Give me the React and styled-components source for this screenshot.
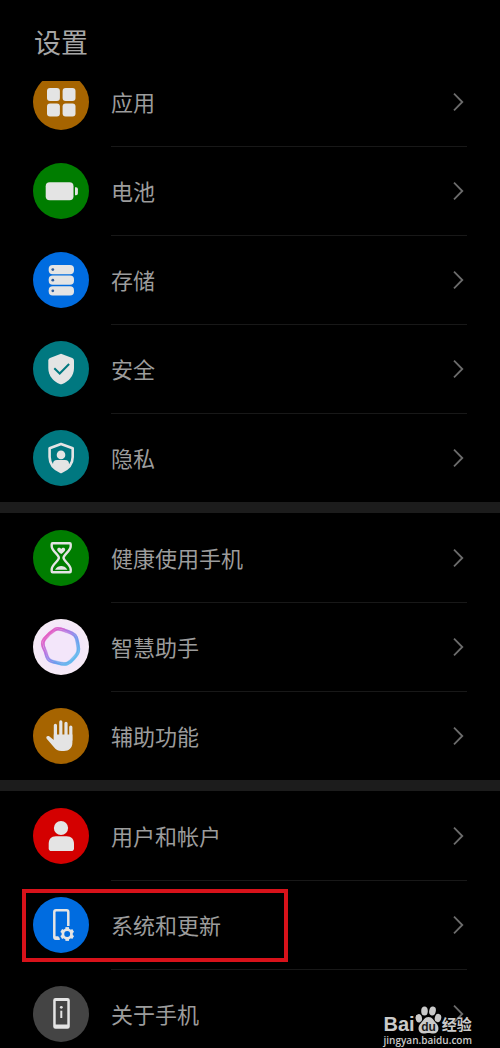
import React from 'react';
import styled, { createGlobalStyle } from 'styled-components';

const GlobalStyle = createGlobalStyle`
        * {
                box-sizing: border-box;
        }
        body {
                margin: 0;
                background-color: #000;
                color: #9c9c9c;
                font-family: "Noto Sans CJK SC", "Noto Sans", sans-serif;
        }
`
const Screen = styled.main`
        position: relative;
        display: flex;
        flex-direction: column;
        height: 100vh;
        overflow: hidden;
`
const Header = styled.header`
        flex: none;
        padding: 24px 34px 21px;
        > h1 {
                margin: 0;
                font-size: 27px;
                line-height: 36px;
                font-weight: 400;
                color: #a6a6a6;
        }
`
const Scroller = styled.div`
        flex: 1;
        min-height: 0;
        overflow: hidden;
`
/* The list is scrolled a little way under the header */
const Scrolled = styled.div`
        margin-top: -24px;
`
const Group = styled.ul`
        list-style: none;
        margin: 0;
        padding: 1px 0 0;
        & + & {
                border-top: 11px solid #1c1c1c;
        }
`
const Row = styled.li`
        position: relative;
        padding: 0 33px;
`
const RowLink = styled.a`
        display: flex;
        align-items: flex-start;
        gap: 22px;
        color: inherit;
        text-decoration: none;
`
const Badge = styled.span`
        flex: none;
        display: block;
        width: 56px;
        height: 56px;
        margin-top: 16px;
        border-radius: 50%;
        background: ${props => props.$color};
        > svg {
                display: block;
        }
`
const RowBody = styled.span`
        flex: 1;
        display: flex;
        align-items: center;
        justify-content: space-between;
        height: 89px;
        padding-right: 3px;
        border-bottom: 1px solid #181818;
        ${Row}:last-child & {
                height: 88px;
                border-bottom: none;
        }
`
const Label = styled.span`
        padding-bottom: 2px;
        font-size: 22px;
        line-height: 32px;
`
const Highlight = styled.span`
        position: absolute;
        top: 8px;
        left: 22px;
        width: 266px;
        height: 73px;
        border: 4px solid #d8121a;
        pointer-events: none;
`
const Watermark = styled.div`
        position: absolute;
        right: 28px;
        bottom: 0;
        color: #cacaca;
`
const Brand = styled.div`
        display: flex;
        align-items: flex-end;
        height: 30px;
        font-family: "Liberation Sans", "Noto Sans CJK SC", sans-serif;
        font-size: 20px;
        line-height: 20px;
        font-weight: 700;
        > svg {
                flex: none;
        }
`
const BrandTopic = styled.span`
        font-family: "Noto Sans CJK SC", sans-serif;
        font-size: 15px;
        line-height: 20px;
        font-weight: 700;
`
const Site = styled.div`
        padding-bottom: 2px;
        font-family: "Open Sans", sans-serif;
        font-size: 10px;
        line-height: 12px;
        font-weight: 600;
`

const INK = '#e4e4e4';

const Icon = ({ children }) => (
        <svg width="56" height="56" viewBox="0 0 56 56" fill={INK} aria-hidden="true">{children}</svg>
)

const AppsIcon = () => (
        <Icon>
                <rect x="14" y="14" width="12.9" height="12.9" rx="3" />
                <rect x="29.6" y="14" width="12.9" height="12.9" rx="3" />
                <rect x="14" y="29.6" width="12.9" height="12.9" rx="3" />
                <rect x="29.6" y="29.6" width="12.9" height="12.9" rx="3" />
        </Icon>
)

const BatteryIcon = () => (
        <Icon>
                <rect x="12.7" y="19.3" width="27.8" height="18" rx="4" />
                <path d="M42 24.2h1c1.2 0 1.9.9 1.9 2v4c0 1.2-.7 2-1.9 2h-1z" />
        </Icon>
)

const StorageIcon = () => (
        <Icon>
                {[13, 23.6, 34.2].map(y => (
                        <g key={y}>
                                <rect x="15.7" y={y} width="25.3" height="9.2" rx="4" />
                                <circle cx="19.8" cy={y + 4.6} r="1.4" fill="#2c5c9c" />
                        </g>
                ))}
        </Icon>
)

const SecurityIcon = () => (
        <Icon>
                <path d="M28 12.7 39.3 17q1.7.7 1.7 2.5V27C41 35 35.5 40.5 29.3 43q-1.3.5-2.6 0C20.5 40.5 15.3 35 15.3 27v-7.5q0-1.800 1.700-2.500z" />
                <path d="M21.3 27.3l5.4 5.2 9.4-9.5" fill="none" stroke="#007880" strokeWidth="2" />
        </Icon>
)

const PrivacyIcon = () => (
        <Icon>
                <path d="M28 14 39.7 18.3V27C39.7 34.5 34.5 39.3 28 42 21.5 39.3 16.6 34.5 16.6 27V18.3z" fill="none" stroke={INK} strokeWidth="2.6" strokeLinejoin="round" />
                <circle cx="28" cy="24.9" r="4.3" />
                <path d="M20 35.5v-1.5q0-4 4-4h8q4 0 4 4v1.5Q32.5 39.5 28 42 23.5 39.5 20 35.5z" />
        </Icon>
)

const HourglassIcon = () => (
        <Icon>
                <path d="M19.6 13.2h17.2q.9 0 .9 1v2C37.700 21 30.500 24.500 30.500 27.800S37.700 34.500 37.700 39.300v2q0 1-.9 1H19.600q-.9 0-.9-1v-2C18.700 34.500 25.900 31.100 25.900 27.800S18.700 21 18.700 16.200V14.200q0-1 .9-1z" fill="none" stroke={INK} strokeWidth="2.4" strokeLinejoin="round" />
                <path d="M28.200 24c-2-1.300-4-2.700-4-4.400 0-2 2.900-2.500 4-.6 1.100-1.900 4-1.400 4 .6 0 1.700-2 3.100-4 4.400z" />
                <path d="M22 39.700c1.500-2.500 4.200-3.600 6.200-3.600s4.700 1.100 6.200 3.600z" />
        </Icon>
)

/* Soft pentagon, drawn several times slightly turned */
const RING = 'M22 9.300C25 7.600 28 8.800 32 10.500 36 12 39.500 12.500 42.500 15.500 45.800 19 45 22.500 46 26.500 47 31 46.800 34 43.500 37.500 40.500 40.700 39 44 34.500 45.500 30 47 27 45.300 23.500 44.500 19 43.500 16 43.500 14 40 12 36.500 12.500 34 10.500 30.500 8.500 26.500 7.500 23.500 10.500 19.500 13.500 15.500 17.500 12 22 9.300z';

const AssistantIcon = () => (
        <Icon>
                <defs>
                        <linearGradient id="ring" gradientUnits="userSpaceOnUse" x1="14" y1="12" x2="42" y2="40">
                                <stop offset="0" stopColor="#ea48b8" />
                                <stop offset=".4" stopColor="#a870e4" />
                                <stop offset=".7" stopColor="#5c94ec" />
                                <stop offset="1" stopColor="#54b4ec" />
                        </linearGradient>
                </defs>
                <g fill="none" stroke="url(#ring)">
                        <path d={RING} strokeWidth="1.5" opacity=".75" />
                        <path d={RING} strokeWidth="4" opacity=".4" transform="translate(1.7 1.7) scale(.94)" />
                        <path d={RING} strokeWidth="1.3" opacity=".65" transform="translate(3.1 3.1) scale(.89)" />
                        <path d={RING} strokeWidth="1.3" opacity=".55" transform="rotate(12 28 27.7) translate(1.7 1.7) scale(.94)" />
                        <path d={RING} strokeWidth="1.3" opacity=".55" transform="rotate(-12 28 27.7) translate(1.7 1.7) scale(.94)" />
                </g>
        </Icon>
)

const HandIcon = () => (
        <Icon>
                <g fill="none" stroke={INK} strokeWidth="3.2" strokeLinecap="round">
                        <path d="M22.4 17.3V32M27.8 13.9V32M33 15.3V32M37.800 19V32" />
                </g>
                <path d="M20.8 26.5H39.4V34.5C39.4 40 36 43 31 43H28.5C25 43 22.8 41.5 20.8 39L13.7 30.7C12.5 29 14.3 27.2 16.2 28.3L20.8 32z" />
        </Icon>
)

const UserIcon = () => (
        <Icon>
                <circle cx="28" cy="20" r="7.1" />
                <path d="M23 28.3h10.5c5 0 7.5 3 7.5 7.5v4.5q0 2.8-2.8 2.8H18.5q-2.8 0-2.8-2.8v-4.5c0-4.5 2.3-7.5 7.3-7.5z" />
        </Icon>
)

const UpdateIcon = () => (
        <Icon>
                <path d="M35.3 29V15q0-1.700-1.700-1.700H23q-1.700 0-1.700 1.700v25q0 1.700 1.700 1.700h3.500" fill="none" stroke={INK} strokeWidth="2.5" />
                <path d="M21 39.3h4.3l1.7 3.4H23q-2 0-2-2z" />
                <circle cx="34.2" cy="37" r="4.3" fill="none" stroke={INK} strokeWidth="2.7" />
                <g stroke={INK} strokeWidth="3.6">
                        {[0, 60, 120, 180, 240, 300].map(angle => (
                                <path key={angle} d="M34.2 32.7v-2.6" transform={`rotate(${angle} 34.2 37)`} />
                        ))}
                </g>
        </Icon>
)

const AboutIcon = () => (
        <Icon>
                <path fillRule="evenodd" d="M22.5 12h12q2.3 0 2.3 2.3v26.2q0 2.3-2.3 2.3h-12q-2.3 0-2.3-2.3V14.3q0-2.3 2.3-2.3zM22.7 15v23.5h11.6V15z" />
                <circle cx="28.3" cy="21.3" r="1.4" />
                <path d="M27.3 24.7h2V32h-2z" />
        </Icon>
)

const Chevron = () => (
        <svg width="12" height="20" viewBox="0 0 12 20" fill="none" stroke="#6c6c6c" strokeWidth="1.8" aria-hidden="true">
                <path d="M2 1.7 10.3 10 2 18.3" />
        </svg>
)

const Paw = () => (
        <svg width="27" height="28" viewBox="0 0 27 28" fill="#cacaca">
                <ellipse cx="3.8" cy="12.3" rx="3.2" ry="4.2" transform="rotate(-10 3.8 12.3)" />
                <ellipse cx="9.5" cy="5" rx="3.3" ry="4.600" />
                <ellipse cx="17.5" cy="5" rx="3.3" ry="4.600" transform="rotate(10 17.5 5)" />
                <ellipse cx="23" cy="12" rx="3.2" ry="4.2" transform="rotate(14 23 12)" />
                <path d="M13.5 11C17.500 11 18.500 14.500 21 17 24.800 20.500 24.500 27.500 18.500 27.500 16 27.500 15.500 27 13.500 27S11 27.500 8.500 27.500C2.500 27.500 2.200 20.500 6 17 8.500 14.500 9.500 11 13.500 11z" />
                <text x="13.5" y="25" textAnchor="middle" fontFamily="Liberation Sans, sans-serif" fontSize="12" fontWeight="700" fill="#1c1c1c">du</text>
        </svg>
)

const groups = [
        [
                { label: '应用', color: '#a66400', icon: AppsIcon },
                { label: '电池', color: '#007d00', icon: BatteryIcon },
                { label: '存储', color: '#006ce0', icon: StorageIcon },
                { label: '安全', color: '#007880', icon: SecurityIcon },
                { label: '隐私', color: '#007880', icon: PrivacyIcon },
        ],
        [
                { label: '健康使用手机', color: '#007d00', icon: HourglassIcon },
                { label: '智慧助手', color: 'radial-gradient(#f3e6fa 45%, #faf0f2)', icon: AssistantIcon },
                { label: '辅助功能', color: '#a66400', icon: HandIcon },
        ],
        [
                { label: '用户和帐户', color: '#d40000', icon: UserIcon },
                { label: '系统和更新', color: '#006ce0', icon: UpdateIcon, highlighted: true },
                { label: '关于手机', color: '#444', icon: AboutIcon },
        ],
];

const SettingRow = ({ label, color, icon: RowIcon, highlighted }) => (
        <Row>
                <RowLink href="#">
                        <Badge $color={color}><RowIcon /></Badge>
                        <RowBody>
                                <Label>{label}</Label>
                                <Chevron />
                        </RowBody>
                </RowLink>
                {highlighted && <Highlight />}
        </Row>
)

const App = () => {
        return (
                <Screen>
                        <GlobalStyle />
                        <Header>
                                <h1>设置</h1>
                        </Header>
                        <Scroller>
                                <Scrolled>
                                        {groups.map((rows, index) => (
                                                <Group key={index}>
                                                        {rows.map(row => <SettingRow key={row.label} {...row} />)}
                                                </Group>
                                        ))}
                                </Scrolled>
                        </Scroller>
                        <Watermark>
                                <Brand>
                                        <span>Bai</span>
                                        <Paw />
                                        <BrandTopic>经验</BrandTopic>
                                </Brand>
                                <Site>jingyan.baidu.com</Site>
                        </Watermark>
                </Screen>
        )
}

export default App;
